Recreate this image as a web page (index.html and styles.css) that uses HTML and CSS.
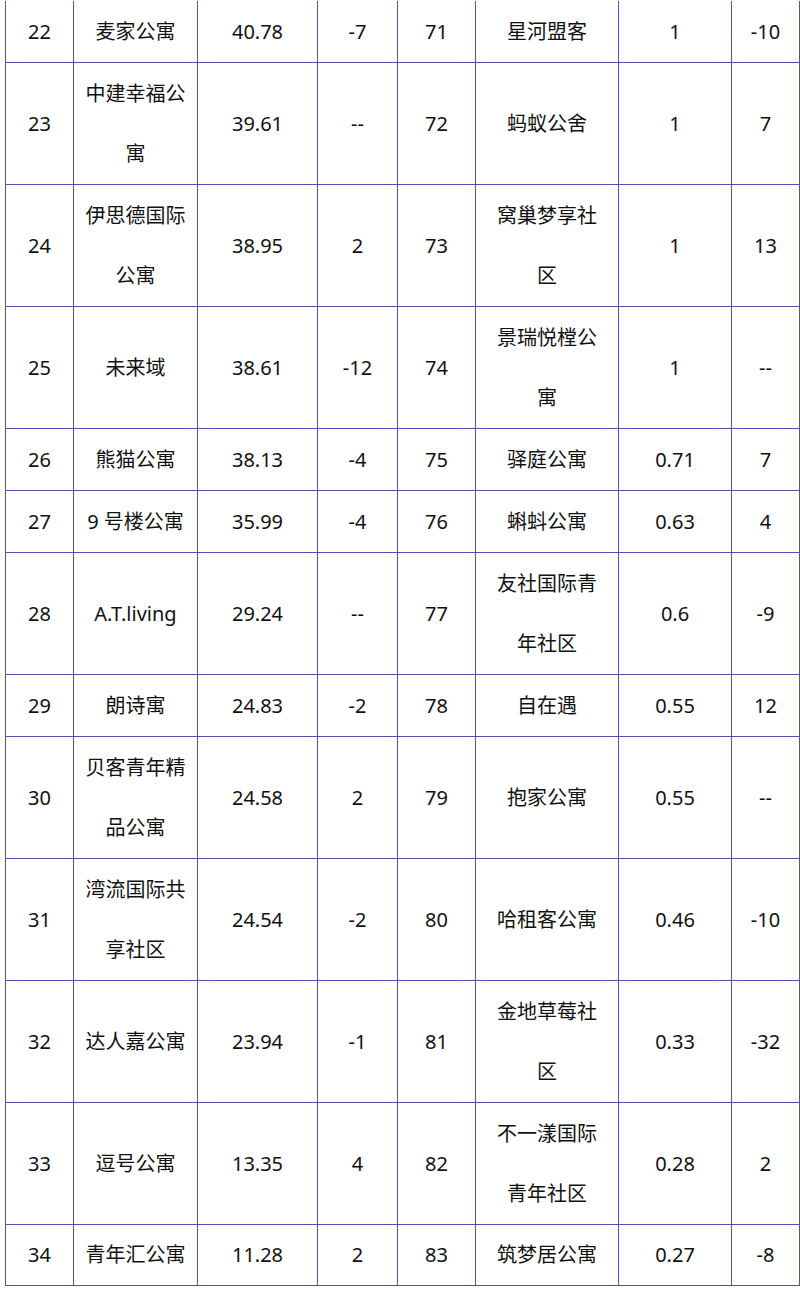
FILE: index.html
```html
<!DOCTYPE html>
<html lang="zh-CN">
<head>
<meta charset="utf-8">
<title>公寓排行</title>
<link rel="stylesheet" href="styles.css">
</head>
<body>
<div class="sheet">
  <div class="grid">
    <div class="c">22</div><div class="c">麦家公寓</div><div class="c">40.78</div><div class="c">-7</div><div class="c">71</div><div class="c">星河盟客</div><div class="c">1</div><div class="c">-10</div>
    <div class="c">23</div><div class="c">中建幸福公<br>寓</div><div class="c">39.61</div><div class="c">--</div><div class="c">72</div><div class="c">蚂蚁公舍</div><div class="c">1</div><div class="c">7</div>
    <div class="c">24</div><div class="c">伊思德国际<br>公寓</div><div class="c">38.95</div><div class="c">2</div><div class="c">73</div><div class="c">窝巢梦享社<br>区</div><div class="c">1</div><div class="c">13</div>
    <div class="c">25</div><div class="c">未来域</div><div class="c">38.61</div><div class="c">-12</div><div class="c">74</div><div class="c">景瑞悦樘公<br>寓</div><div class="c">1</div><div class="c">--</div>
    <div class="c">26</div><div class="c">熊猫公寓</div><div class="c">38.13</div><div class="c">-4</div><div class="c">75</div><div class="c">驿庭公寓</div><div class="c">0.71</div><div class="c">7</div>
    <div class="c">27</div><div class="c">9 号楼公寓</div><div class="c">35.99</div><div class="c">-4</div><div class="c">76</div><div class="c">蝌蚪公寓</div><div class="c">0.63</div><div class="c">4</div>
    <div class="c">28</div><div class="c">A.T.living</div><div class="c">29.24</div><div class="c">--</div><div class="c">77</div><div class="c">友社国际青<br>年社区</div><div class="c">0.6</div><div class="c">-9</div>
    <div class="c">29</div><div class="c">朗诗寓</div><div class="c">24.83</div><div class="c">-2</div><div class="c">78</div><div class="c">自在遇</div><div class="c">0.55</div><div class="c">12</div>
    <div class="c">30</div><div class="c">贝客青年精<br>品公寓</div><div class="c">24.58</div><div class="c">2</div><div class="c">79</div><div class="c">抱家公寓</div><div class="c">0.55</div><div class="c">--</div>
    <div class="c">31</div><div class="c">湾流国际共<br>享社区</div><div class="c">24.54</div><div class="c">-2</div><div class="c">80</div><div class="c">哈租客公寓</div><div class="c">0.46</div><div class="c">-10</div>
    <div class="c">32</div><div class="c">达人嘉公寓</div><div class="c">23.94</div><div class="c">-1</div><div class="c">81</div><div class="c">金地草莓社<br>区</div><div class="c">0.33</div><div class="c">-32</div>
    <div class="c">33</div><div class="c">逗号公寓</div><div class="c">13.35</div><div class="c">4</div><div class="c">82</div><div class="c">不一漾国际<br>青年社区</div><div class="c">0.28</div><div class="c">2</div>
    <div class="c">34</div><div class="c">青年汇公寓</div><div class="c">11.28</div><div class="c">2</div><div class="c">83</div><div class="c">筑梦居公寓</div><div class="c">0.27</div><div class="c">-8</div>
  </div>
</div>
</body>
</html>
```
FILE: styles.css
```css
html, body {
  margin: 0;
  padding: 0;
  background: #ffffff;
}

.sheet {
  padding-top: 1px;
  padding-left: 5px;
}

.grid {
  display: grid;
  grid-template-columns: 68px 124px 120px 80px 78px 143px 113px 68px;
  grid-template-rows: 62px 122px 122px 122px 62px 62px 122px 62px 122px 122px 122px 122px 61px;
  border-left: 1px solid #5e4ab3;
  width: 794px;
  font-family: "Noto Sans", "Noto Sans CJK SC", sans-serif;
  font-size: 20px;
  color: #111111;
}

.c {
  box-sizing: border-box;
  border-right: 1px solid #5e4ab3;
  border-bottom: 1px solid #5e4ab3;
  line-height: 60px;
  text-align: center;
  display: flex;
  align-items: center;
  justify-content: center;
  white-space: nowrap;
  overflow: hidden;
}
```
